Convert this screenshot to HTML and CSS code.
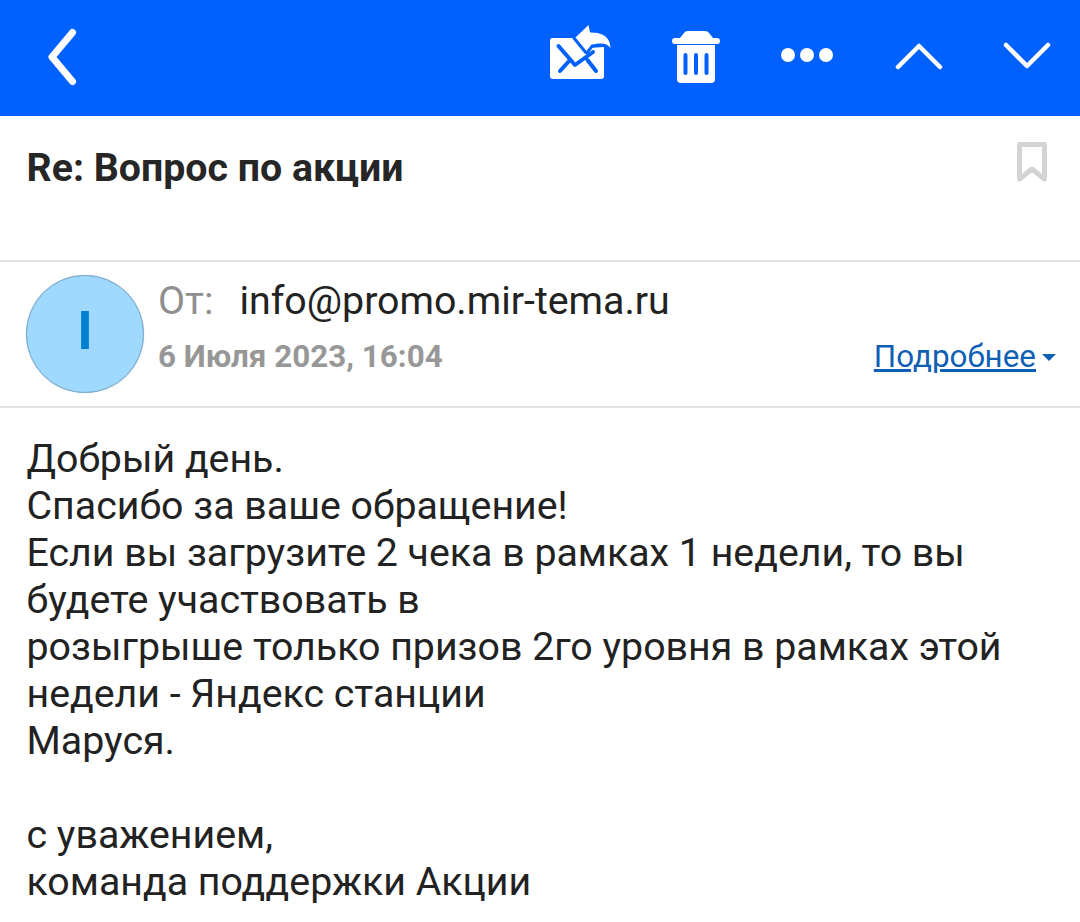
FILE: index.html
```html
<!DOCTYPE html>
<html lang="ru">
<head>
  <meta charset="UTF-8">
  <title>Re: Вопрос по акции</title>
  <link rel="stylesheet" href="styles.css">
</head>

<body>

  <div class="toolbar">
    <svg class="icon-back" width="32" height="60" viewBox="0 0 32 60">
      <path d="M25.500 5.500 L5 30 L25.500 54.500" />
    </svg>
    <div class="toolbar-actions">
      <svg class="icon-reply" width="66" height="58" viewBox="0 0 66 58">
        <path class="fill" d="M4.500 15 H30 L40 25 L56 24 V53 Q56 56 53 56 H5 Q2 56 2 53 V18 Q2 15 4.500 15 Z" />
        <path class="cut" d="M10.500 23 L27 42 L45 29 M12 48 L22 37 M48 48 L39.500 37" />
        <path class="arrow" d="M27.500 14.500 L40.500 2 L42 9.500 C52 9.500 62 12 62.500 25 C59 20 54 19.500 43.500 21.500 L38.500 28 Z" />
      </svg>
      <svg class="icon-trash" width="48" height="52" viewBox="0 0 48 52">
        <path class="fill" d="M8 7 L12 2 Q13 0 16 0 H33 Q36 0 37 2 L41 7 H45 Q48 7 48 10 Q48 13 45 13 H3 Q0 13 0 10 Q0 7 3 7 Z" />
        <path class="fill" d="M5 14 H43 V48 Q43 52 39 52 H9 Q5 52 5 48 Z" />
        <path class="cut" d="M13.500 24 V42 M24 24 V42 M34.500 24 V42" />
      </svg>
      <div class="dots"><span></span><span></span><span></span></div>
      <svg class="icon-chevron" width="48" height="28" viewBox="0 0 48 28">
        <path d="M3 25 L24 4 L45 25" />
      </svg>
      <svg class="icon-chevron" width="48" height="28" viewBox="0 0 48 28">
        <path d="M3 3 L24 24 L45 3" />
      </svg>
    </div>
  </div>

  <div class="subject">
    <h1>Re: Вопрос по акции</h1>
    <svg class="icon-bookmark" width="30" height="40" viewBox="0 0 30 40">
      <path d="M2.500 2.500 H27.500 V37 L15 27 L2.500 37 Z" />
    </svg>
  </div>

  <div class="sender">
    <div class="avatar">I</div>
    <div class="sender-info">
      <div class="from"><span class="from-label">От:</span><span>info@promo.mir-tema.ru</span></div>
      <div class="meta">
        <span class="date">6 Июля 2023, 16:04</span>
        <a class="details">Подробнее<span class="caret"></span></a>
      </div>
    </div>
  </div>

  <div class="message">
    Добрый день.<br>
    Спасибо за ваше обращение!<br>
    Если вы загрузите 2 чека в рамках 1 недели, то вы будете участвовать в<br>
    розыгрыше только призов 2го уровня в рамках этой недели - Яндекс станции<br>
    Маруся.<br>
    <br>
    с уважением,<br>
    команда поддержки Акции
  </div>

</body>
</html>
```

FILE: styles.css
```css
body {
  margin: 0;
  padding: 0;
  background: #fff;
  font-family: Roboto, sans-serif;
  color: #222;
  height: 922px;
  overflow: hidden;
}
.toolbar {
  background: #0061fe;
  height: 116px;
  display: flex;
  align-items: center;
  justify-content: space-between;
  padding: 0 29px 0 47px;
  box-sizing: border-box;
}
.toolbar svg path {
  fill: none;
  stroke: #fff;
  stroke-linecap: round;
  stroke-linejoin: round;
}
.toolbar svg path.fill {
  fill: #fff;
  stroke: none;
}
.toolbar svg path.cut {
  stroke: #0061fe;
  stroke-width: 4;
}
.toolbar svg path.arrow {
  fill: #fff;
  stroke: #0061fe;
  stroke-width: 6;
  paint-order: stroke;
}
.icon-back {
  margin-bottom: 2px;
}
.icon-back path {
  stroke-width: 7;
}
.toolbar-actions {
  display: flex;
  align-items: center;
}
.icon-reply {
  margin-right: 58px;
  margin-bottom: 12px;
}
.icon-trash {
  margin-right: 61px;
  margin-bottom: 2px;
}
.icon-chevron {
  margin-bottom: 4px;
}
.icon-chevron path {
  stroke-width: 4.5;
}
.icon-chevron + .icon-chevron {
  margin-left: 60px;
}
.dots {
  display: flex;
  gap: 5px;
  margin-right: 62px;
  margin-bottom: 6px;
}
.dots span {
  width: 14px;
  height: 14px;
  border-radius: 50%;
  background: #fff;
}
.subject {
  height: 146px;
  box-sizing: border-box;
  border-bottom: 2px solid #e2e2e2;
  padding: 26px 33px 0 26.5px;
  display: flex;
  justify-content: space-between;
  align-items: flex-start;
}
h1 {
  margin: -2px 0 0;
  font-size: 39.3px;
  line-height: 56px;
  font-weight: 700;
  color: #262626;
}
.icon-bookmark path {
  fill: none;
  stroke: #d3d3d3;
  stroke-width: 5;
  stroke-linejoin: round;
}
.sender {
  height: 146px;
  box-sizing: border-box;
  border-bottom: 2px solid #e2e2e2;
  padding: 13px 24px 0 26px;
  display: flex;
}
.avatar {
  width: 118px;
  height: 118px;
  box-sizing: border-box;
  border-radius: 50%;
  background: #a0d9ff;
  border: 1px solid #7faccb;
  box-shadow: 0 0 1px #7faccb;
  color: #0080d4;
  font-size: 53px;
  font-weight: 700;
  padding-bottom: 6px;
  display: flex;
  align-items: center;
  justify-content: center;
  flex-shrink: 0;
}
.sender-info {
  flex: 1;
  margin-left: 14px;
}
.from {
  font-size: 39.3px;
  line-height: 52px;
}
.from-label {
  color: #8f8f8f;
  margin-right: 26px;
}
.meta {
  display: flex;
  justify-content: space-between;
  align-items: center;
  margin-top: 11px;
}
.date {
  font-size: 31.4px;
  font-weight: 700;
  color: #979797;
}
.details {
  font-size: 31.4px;
  color: #0f5fb5;
  text-decoration: underline;
  text-decoration-thickness: 2.5px;
}
.caret {
  display: inline-block;
  width: 0;
  height: 0;
  margin-left: 6px;
  margin-bottom: 6px;
  border-left: 7px solid transparent;
  border-right: 7px solid transparent;
  border-top: 7px solid #0f5fb5;
}
.message {
  padding: 28px 26.5px 0;
  font-size: 39.3px;
  line-height: 47px;
  color: #222;
}
```
